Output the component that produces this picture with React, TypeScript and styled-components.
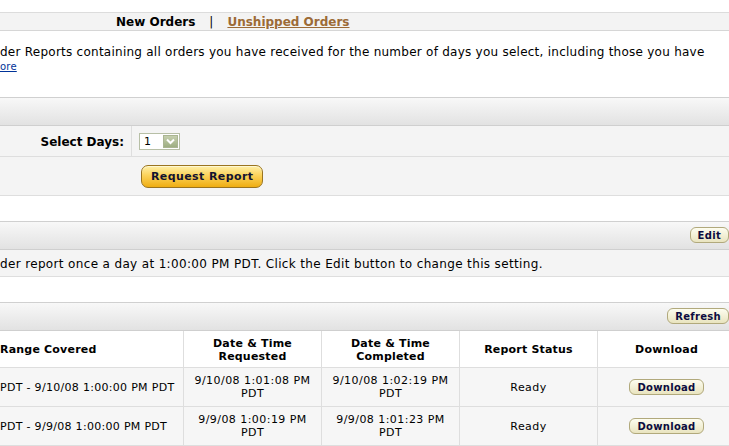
import React from "react";
import styled, { createGlobalStyle } from "styled-components";

const Global = createGlobalStyle`
  html, body { margin: 0; padding: 0; background: #ffffff; overflow: hidden; }
  body { font-family: "DejaVu Sans", Verdana, sans-serif; color: #000; }
`;

const Page = styled.div`
  width: 735px;
  padding-top: 12px;
`;

const TabBar = styled.div`
  display: flex;
  align-items: center;
  height: 16px;
  padding-top: 1px;
  box-sizing: content-box;
  border-top: 1px solid #dcdcdc;
  border-bottom: 1px solid #d6d6d6;
  background: #f3f3f3;
  padding-left: 116px;
  font-size: 12px;
  font-weight: bold;
`;

const Tab = styled.span<{ $link?: boolean }>`
  color: ${(p) => (p.$link ? "#9c6a36" : "#000")};
  text-decoration: ${(p) => (p.$link ? "underline" : "none")};
`;

const TabSep = styled.span`
  font-weight: normal;
  padding: 0 14px 0 14px;
`;

const Intro = styled.div`
  padding-top: 13px;
  height: 53px;
  font-size: 12px;
  letter-spacing: 0.25px;
  line-height: 16px;
`;

const MoreLink = styled.a`
  display: block;
  font-size: 10px;
  letter-spacing: 0.2px;
  line-height: 13px;
  color: #003399;
  text-decoration: underline;
`;

const Section = styled.div<{ $gap: number }>`
  margin-bottom: ${(p) => p.$gap}px;
`;

const SectionHeader = styled.div`
  display: flex;
  align-items: center;
  justify-content: flex-end;
  height: 27px;
  padding-right: 6px;
  border-top: 1px solid #d0d0d0;
  border-bottom: 1px solid #cfcfcf;
  background: linear-gradient(#f8f8f8, #e2e2e2);
`;

const FormRow = styled.div<{ $h: number }>`
  display: grid;
  grid-template-columns: 132px 1fr;
  height: ${(p) => p.$h}px;
  background: #f4f4f4;
  border-bottom: 1px solid #dedede;
`;

const Label = styled.div<{ $divider?: boolean }>`
  display: flex;
  align-items: center;
  justify-content: flex-end;
  padding-right: 7px;
  padding-top: 1px;
  font-size: 12px;
  font-weight: bold;
  border-right: 1px solid ${(p) => (p.$divider ? "#dedede" : "transparent")};
`;

const Field = styled.div`
  display: flex;
  align-items: center;
  padding-left: 7px;
`;

const SelectBox = styled.div`
  display: flex;
  align-items: center;
  justify-content: space-between;
  width: 35px;
  height: 15px;
  border: 1px solid #b7bfa6;
  background: #fff;
  font-size: 11px;
  padding-left: 4px;
  box-sizing: content-box;
`;

const SelectArrow = styled.span`
  display: flex;
  align-items: center;
  justify-content: center;
  width: 15px;
  height: 13px;
  margin-right: 1px;
  background: linear-gradient(#c5cfae, #9eae82);
  border: 1px solid #aab592;
  box-sizing: border-box;
`;

const GoldButton = styled.button`
  height: 23px;
  margin-left: 2px;
  padding: 0 9px;
  border: 1px solid #9a7420;
  border-radius: 7px;
  background: linear-gradient(#fff0a8 0%, #fbd25a 45%, #efad12 100%);
  box-shadow: inset 0 1px 0 #fff8d0;
  font-family: "DejaVu Sans", Verdana, sans-serif;
  font-size: 11px;
  letter-spacing: 0.4px;
  font-weight: bold;
  color: #131330;
  cursor: pointer;
`;

const SmallButton = styled.button`
  height: 16px;
  padding: 0 7px;
  border: 1px solid #b1a97c;
  border-radius: 6px;
  background: linear-gradient(#fdfdf0, #e9e4bf);
  font-family: "DejaVu Sans", Verdana, sans-serif;
  font-size: 10px;
  letter-spacing: 0.3px;
  font-weight: bold;
  line-height: 13px;
  color: #0c0c40;
  cursor: pointer;
`;

const HeaderButton = styled(SmallButton)`
  margin-top: -1px;
`;

const InfoRow = styled.div`
  display: flex;
  align-items: center;
  height: 27px;
  padding-top: 1px;
  box-sizing: border-box;
  background: #f4f4f4;
  border-bottom: 1px solid #dedede;
  font-size: 12px;
  letter-spacing: 0.35px;
`;

const Table = styled.table`
  border-collapse: collapse;
  table-layout: fixed;
  width: 735px;
  font-size: 11px;
`;

const Th = styled.th<{ $w: number; $left?: boolean }>`
  width: ${(p) => p.$w}px;
  height: 35px;
  padding: 1px 0 0 0;
  background: #fff;
  border-right: 1px solid #dedede;
  border-bottom: 1px solid #dedede;
  text-align: ${(p) => (p.$left ? "left" : "center")};
  font-weight: bold;
  letter-spacing: 0.2px;
  line-height: 13px;
  &:last-child { border-right: none; }
`;

const Td = styled.td<{ $left?: boolean }>`
  height: 38px;
  padding: 0;
  background: #f6f6f6;
  border-right: 1px solid #dedede;
  border-bottom: 1px solid #dedede;
  text-align: ${(p) => (p.$left ? "left" : "center")};
  letter-spacing: ${(p) => (p.$left ? "0.3px" : "0.45px")};
  line-height: 13px;
  &:last-child { border-right: none; }
`;

const Chevron = () => (
  <svg width="9" height="7" viewBox="0 0 9 7">
    <path d="M1 1.5 L4.5 5 L8 1.5" fill="none" stroke="#fff" strokeWidth="2" />
  </svg>
);

const rows = [
  {
    range: "PDT - 9/10/08 1:00:00 PM PDT",
    req: ["9/10/08 1:01:08 PM", "PDT"],
    done: ["9/10/08 1:02:19 PM", "PDT"],
  },
  {
    range: "PDT - 9/9/08 1:00:00 PM PDT",
    req: ["9/9/08 1:00:19 PM", "PDT"],
    done: ["9/9/08 1:01:23 PM", "PDT"],
  },
];

export default function App() {
  return (
    <>
      <Global />
      <Page>
        <TabBar>
          <Tab>New Orders</Tab>
          <TabSep>|</TabSep>
          <Tab $link>Unshipped Orders</Tab>
        </TabBar>
        <Intro>
          der Reports containing all orders you have received for the number of days you select, including those you have
          <MoreLink href="#">ore</MoreLink>
        </Intro>

        <Section $gap={25}>
          <SectionHeader />
          <FormRow $h={30}>
            <Label $divider>Select Days:</Label>
            <Field>
              <SelectBox>
                1
                <SelectArrow>
                  <Chevron />
                </SelectArrow>
              </SelectBox>
            </Field>
          </FormRow>
          <FormRow $h={38}>
            <Label />
            <Field>
              <GoldButton>Request Report</GoldButton>
            </Field>
          </FormRow>
        </Section>

        <Section $gap={25}>
          <SectionHeader>
            <HeaderButton>Edit</HeaderButton>
          </SectionHeader>
          <InfoRow>
            der report once a day at 1:00:00 PM PDT. Click the Edit button to change this setting.
          </InfoRow>
        </Section>

        <Section $gap={0}>
          <SectionHeader>
            <HeaderButton>Refresh</HeaderButton>
          </SectionHeader>
          <Table>
            <thead>
              <tr>
                <Th $w={183} $left>Range Covered</Th>
                <Th $w={137}>Date &amp; Time<br />Requested</Th>
                <Th $w={137}>Date &amp; Time<br />Completed</Th>
                <Th $w={137}>Report Status</Th>
                <Th $w={137}>Download</Th>
              </tr>
            </thead>
            <tbody>
              {rows.map((r) => (
                <tr key={r.range}>
                  <Td $left>{r.range}</Td>
                  <Td>{r.req[0]}<br />{r.req[1]}</Td>
                  <Td>{r.done[0]}<br />{r.done[1]}</Td>
                  <Td>Ready</Td>
                  <Td>
                    <SmallButton>Download</SmallButton>
                  </Td>
                </tr>
              ))}
            </tbody>
          </Table>
        </Section>
      </Page>
    </>
  );
}
